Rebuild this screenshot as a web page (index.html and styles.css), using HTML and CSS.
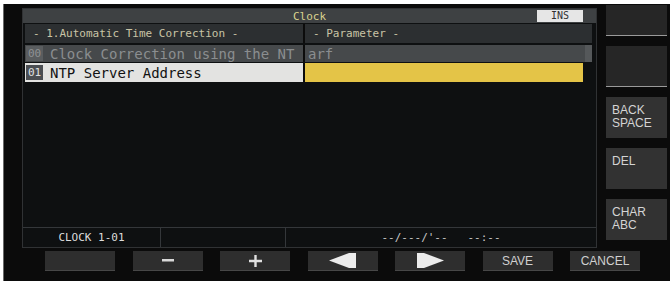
FILE: index.html
```html
<!DOCTYPE html>
<html lang="en">
<head>
  <meta charset="UTF-8" />
  <title>Clock Menu</title>
  <link rel="stylesheet" href="styles.css">
</head>
<body>

  <div class="screen">
    <div class="upper">

      <!-- Main list panel -->
      <div class="panel">
        <div class="title-bar">
          <span></span>
          <span class="title">Clock</span>
          <span class="ins">INS</span>
        </div>

        <div class="list">
          <div class="row head">
            <div class="cell name">- 1.Automatic Time Correction -</div>
            <div class="cell param">- Parameter -</div>
            <div class="gutter"></div>
          </div>
          <div class="row item dim">
            <div class="cell name"><span class="num">00</span>Clock Correction using the NT</div>
            <div class="cell param">arf</div>
            <div class="gutter"><span class="scroll"></span></div>
          </div>
          <div class="row item sel">
            <div class="cell name"><span class="num">01</span>NTP Server Address</div>
            <div class="cell param"></div>
            <div class="gutter"></div>
          </div>
        </div>

        <div class="status">
          <div class="seg seg-a">CLOCK 1-01</div>
          <div class="seg seg-b"></div>
          <div class="seg seg-c">--/---/'--&nbsp;&nbsp;&nbsp;--:--</div>
        </div>
      </div>

      <!-- Side keys -->
      <div class="side">
        <div class="skey blank short"></div>
        <div class="skey blank"></div>
        <div class="skey">BACK<br>SPACE</div>
        <div class="skey">DEL</div>
        <div class="skey">CHAR<br>ABC</div>
      </div>
    </div>

    <!-- Soft keys -->
    <div class="softkeys">
      <div class="fkey"></div>
      <div class="fkey">
        <svg width="12" height="3" viewBox="0 0 12 3"><rect width="12" height="2.5" fill="#d8d8d8"/></svg>
      </div>
      <div class="fkey">
        <svg width="13" height="12" viewBox="0 0 13 12"><path d="M6.5 0v12M0 6h13" stroke="#e0e0e0" stroke-width="2.4"/></svg>
      </div>
      <div class="fkey">
        <svg width="27" height="15" viewBox="0 0 27 15"><polygon points="0,7.5 20,0 27,0 27,15 20,15" fill="#ececec"/></svg>
      </div>
      <div class="fkey">
        <svg width="27" height="15" viewBox="0 0 27 15"><polygon points="0,0 7,0 27,7.5 7,15 0,15" fill="#ececec"/></svg>
      </div>
      <div class="fkey">SAVE</div>
      <div class="fkey">CANCEL</div>
    </div>
  </div>

</body>
</html>
```

FILE: styles.css
```css
* {
  box-sizing: border-box;
}

body {
  margin: 0;
  background: #fff;
  font-family: 'DejaVu Sans Mono', monospace;
  overflow: hidden;
}

.screen {
  margin: 4px 0 0 3px;
  width: 667px;
  height: 277px;
  border-left: 1px solid #6a6a6a;
  background: #0b0b0b;
}

.upper {
  display: flex;
  gap: 9px;
  height: 244px;
  padding-left: 18px;
}

/* Main panel */
.panel {
  margin-top: 4px;
  width: 575px;
  height: 240px;
  display: flex;
  flex-direction: column;
  border: 1px solid #303234;
  background: #0e1011;
}

.title-bar {
  display: grid;
  grid-template-columns: 1fr auto 1fr;
  align-items: center;
  height: 14px;
  background: #3e4143;
}

.title {
  font-size: 11px;
  color: #d9d18e;
}

.ins {
  justify-self: end;
  width: 46px;
  height: 12px;
  margin-right: 13px;
  background: #e6e6e6;
  color: #333;
  font-size: 10px;
  line-height: 12px;
  text-align: center;
}

.list {
  padding: 1px 4px 0 2px;
}

.row {
  display: grid;
  grid-template-columns: 280px 278px 9px;
}

.cell {
  display: flex;
  align-items: center;
  white-space: nowrap;
  overflow: hidden;
}

.cell.name {
  border-right: 2px solid #0c0c0c;
}

.row.head {
  height: 19px;
  background: #2c2f31;
  font-size: 11px;
  color: #c9c4a6;
}

.row.head .name {
  padding-left: 8px;
}

.row.head .param {
  padding-left: 8px;
}

.row.item {
  font-size: 14px;
}

.row.item .name {
  padding-left: 1px;
}

.row.item .param {
  padding-left: 3px;
}

.num {
  width: 17px;
  height: 15px;
  margin-right: 7px;
  font-size: 11px;
  line-height: 15px;
  text-align: center;
}

.row.dim {
  margin-top: 2px;
  height: 17px;
  background: #46494b;
  color: #8b8e90;
}

.row.dim .num {
  background: #5a5d5f;
  color: #8f9294;
}

.row.sel {
  margin-top: 1px;
  height: 19px;
}

.row.sel .name {
  background: #e3e3e1;
  color: #111;
}

.row.sel .num {
  background: #4b4e52;
  color: #e0e0e0;
}

.row.sel .param {
  background: #e4c447;
}

.row.sel .gutter {
  background: #0e1011;
}

.gutter {
  display: flex;
  padding-left: 2px;
}

.scroll {
  width: 7px;
  background: #55585a;
}

/* Status line */
.status {
  margin-top: auto;
  display: flex;
  height: 20px;
  border-top: 1px solid #34373a;
  font-size: 11px;
  color: #dcdcdc;
}

.seg {
  display: flex;
  align-items: center;
  justify-content: center;
}

.seg-a {
  width: 137px;
}

.seg-b {
  width: 125px;
  border-left: 1px solid #34373a;
}

.seg-c {
  flex-grow: 1;
  border-left: 1px solid #34373a;
  color: #c8c8c8;
}

/* Side keys */
.side {
  display: flex;
  flex-direction: column;
  gap: 10px;
  width: 61px;
  padding-top: 1px;
}

.skey {
  height: 41px;
  padding: 7px 0 0 6px;
  background: #323232;
  color: #d4d4d4;
  font-family: 'Liberation Sans', Arial, sans-serif;
  font-size: 12px;
  line-height: 13px;
}

.skey.blank {
  background: #262626;
  border-bottom: 1px solid #9a9a9a;
}

.skey.short {
  height: 31px;
}

/* Soft keys */
.softkeys {
  display: flex;
  gap: 17.5px;
  margin-top: 3px;
  padding-left: 41px;
}

.fkey {
  display: flex;
  align-items: center;
  justify-content: center;
  width: 70px;
  height: 20px;
  background: #2e2e2e;
  border-bottom: 1px solid #474747;
  color: #d0d0d0;
  font-family: 'Liberation Sans', Arial, sans-serif;
  font-size: 12px;
}
```
